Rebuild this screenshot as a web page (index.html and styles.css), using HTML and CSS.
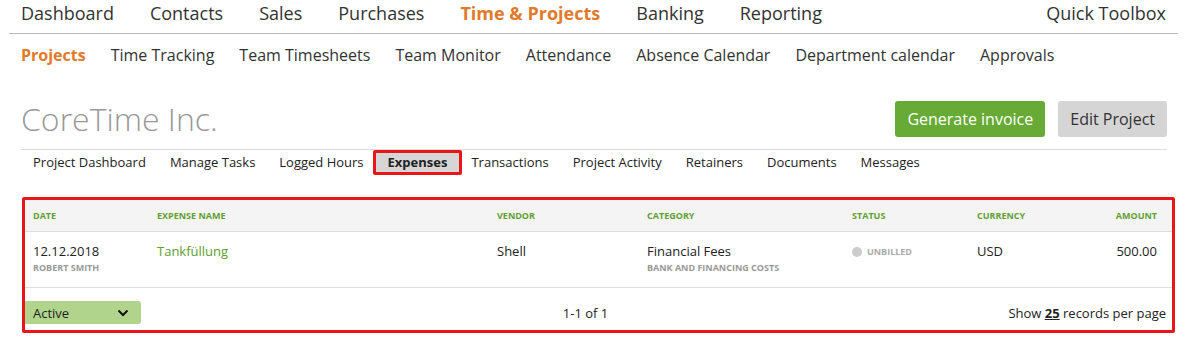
FILE: index.html
```html
<!DOCTYPE html>
<html lang="en">
<head>
    <meta charset="UTF-8">
    <meta name="viewport" content="width=device-width, initial-scale=1.0">
    <title>CoreTime Inc. - Expenses</title>
    <link rel="stylesheet" href="styles.css">
</head>
<body>

    <div class="page">
        <!-- Main navigation -->
        <nav class="main-nav">
            <a href="#">Dashboard</a>
            <a href="#">Contacts</a>
            <a href="#">Sales</a>
            <a href="#">Purchases</a>
            <a href="#" class="active">Time &amp; Projects</a>
            <a href="#">Banking</a>
            <a href="#">Reporting</a>
            <a href="#" class="toolbox">Quick Toolbox</a>
        </nav>

        <div class="content">
            <!-- Section navigation -->
            <nav class="sub-nav">
                <a href="#" class="active">Projects</a>
                <a href="#">Time Tracking</a>
                <a href="#">Team Timesheets</a>
                <a href="#">Team Monitor</a>
                <a href="#">Attendance</a>
                <a href="#">Absence Calendar</a>
                <a href="#">Department calendar</a>
                <a href="#">Approvals</a>
            </nav>

            <div class="project-header">
                <h1>CoreTime Inc.</h1>
                <div class="actions">
                    <button class="btn btn-green">Generate invoice</button>
                    <button class="btn btn-grey">Edit Project</button>
                </div>
            </div>

            <!-- Project tabs -->
            <nav class="project-tabs">
                <a href="#">Project Dashboard</a>
                <a href="#">Manage Tasks</a>
                <a href="#">Logged Hours</a>
                <a href="#" class="active">Expenses</a>
                <a href="#">Transactions</a>
                <a href="#">Project Activity</a>
                <a href="#">Retainers</a>
                <a href="#">Documents</a>
                <a href="#">Messages</a>
            </nav>

            <!-- Expenses list -->
            <div class="expenses">
                <div class="row head">
                    <div>Date</div>
                    <div>Expense Name</div>
                    <div>Vendor</div>
                    <div>Category</div>
                    <div>Status</div>
                    <div>Currency</div>
                    <div class="amount">Amount</div>
                </div>

                <div class="row item">
                    <div>
                        12.12.2018
                        <span class="sub">Robert Smith</span>
                    </div>
                    <div><a href="#" class="link">Tankfüllung</a></div>
                    <div>Shell</div>
                    <div>
                        Financial Fees
                        <span class="sub">Bank and Financing Costs</span>
                    </div>
                    <div class="status"><span class="dot"></span>Unbilled</div>
                    <div>USD</div>
                    <div class="amount">500.00</div>
                </div>

                <div class="list-footer">
                    <div class="select">
                        Active
                        <svg width="12" height="8" viewBox="0 0 12 8"><path d="M1.5 1.5 L6 6 L10.5 1.5" fill="none" stroke="#111" stroke-width="2"/></svg>
                    </div>
                    <div class="pages">1-1 of 1</div>
                    <div class="per-page">Show <a href="#">25</a> records per page</div>
                </div>
            </div>
        </div>
    </div>

</body>
</html>
```

FILE: styles.css
```css
body {
    margin: 0;
    font-family: "Open Sans", "Liberation Sans", sans-serif;
    color: #222;
    background-color: white;
}

a {
    color: inherit;
    text-decoration: none;
}

.page {
    padding: 0 20px 0 9px;
}

/* top navigation */
.main-nav {
    display: flex;
    gap: 36px;
    padding: 0 12px 7px 12px;
    border-bottom: 1px solid #bbb;
    font-size: 18px;
    line-height: 26px;
    color: #333;
}

.main-nav .active {
    color: #e2792b;
    font-weight: 700;
}

.main-nav .toolbox {
    margin-left: auto;
}

.content {
    padding: 0 11px 0 12px;
}

.sub-nav {
    display: flex;
    gap: 25px;
    padding-top: 10px;
    font-size: 16px;
    line-height: 22px;
    color: #333;
}

.sub-nav .active {
    color: #e2792b;
    font-weight: 700;
}

/* project title row */
.project-header {
    display: flex;
    align-items: center;
    justify-content: space-between;
    margin-top: 35px;
    margin-bottom: 12px;
}

.project-header h1 {
    margin: 0;
    font-size: 32px;
    font-weight: 300;
    line-height: 36px;
    color: #999;
}

.actions {
    display: flex;
    gap: 13px;
}

.btn {
    height: 36px;
    padding: 0 12px;
    border: none;
    border-radius: 3px;
    font-family: inherit;
    font-size: 16px;
}

.btn-green {
    background-color: #67aa35;
    color: white;
}

.btn-grey {
    background-color: #d5d5d5;
    color: #333;
}

/* project tabs */
.project-tabs {
    display: flex;
    border-top: 1px solid #ddd;
    font-size: 13px;
    line-height: 25px;
}

.project-tabs a {
    padding: 0 12px;
}

.project-tabs .active {
    margin: 0 -3px;
    padding: 0 12px;
    border: 3px solid #e8161b;
    border-radius: 2px;
    background-color: #d6d6d6;
    font-weight: 700;
    line-height: 19px;
}

/* expenses table */
.expenses {
    margin: 22px -8px 0 1px;
    border: 3px solid #e8161b;
    border-radius: 2px;
}

.row {
    display: grid;
    grid-template-columns: 124px 340px 150px 205px 125px 100px 1fr;
    padding: 0 15px 0 8px;
    border-bottom: 1px solid #ddd;
}

.row .amount {
    text-align: right;
}

.head {
    height: 31px;
    align-items: center;
    background-color: #f4f4f4;
    color: #62a033;
    font-size: 9px;
    font-weight: 700;
    text-transform: uppercase;
}

.item {
    height: 56px;
    padding-top: 9px;
    box-sizing: border-box;
    font-size: 13px;
    line-height: 20px;
}

.item .sub {
    display: block;
    color: #999;
    font-size: 9px;
    font-weight: 700;
    line-height: 14px;
    text-transform: uppercase;
}

.item .link {
    color: #5d9e2f;
}

.status {
    display: flex;
    align-items: center;
    height: 22px;
    color: #aaa;
    font-size: 9px;
    font-weight: 700;
    text-transform: uppercase;
}

.dot {
    width: 10px;
    height: 10px;
    margin-right: 5px;
    border-radius: 50%;
    background-color: #ccc;
}

.list-footer {
    display: grid;
    grid-template-columns: 1fr auto 1fr;
    align-items: center;
    padding: 13px 6px 6px 0;
    font-size: 13px;
}

.select {
    display: flex;
    align-items: center;
    justify-content: space-between;
    width: 116px;
    height: 23px;
    padding: 0 12px 0 8px;
    box-sizing: border-box;
    border-radius: 0 3px 3px 0;
    background-color: #b1d48c;
}

.pages {
    margin-right: 20px;
}

.per-page {
    text-align: right;
}

.per-page a {
    font-weight: 700;
    text-decoration: underline;
}
```
